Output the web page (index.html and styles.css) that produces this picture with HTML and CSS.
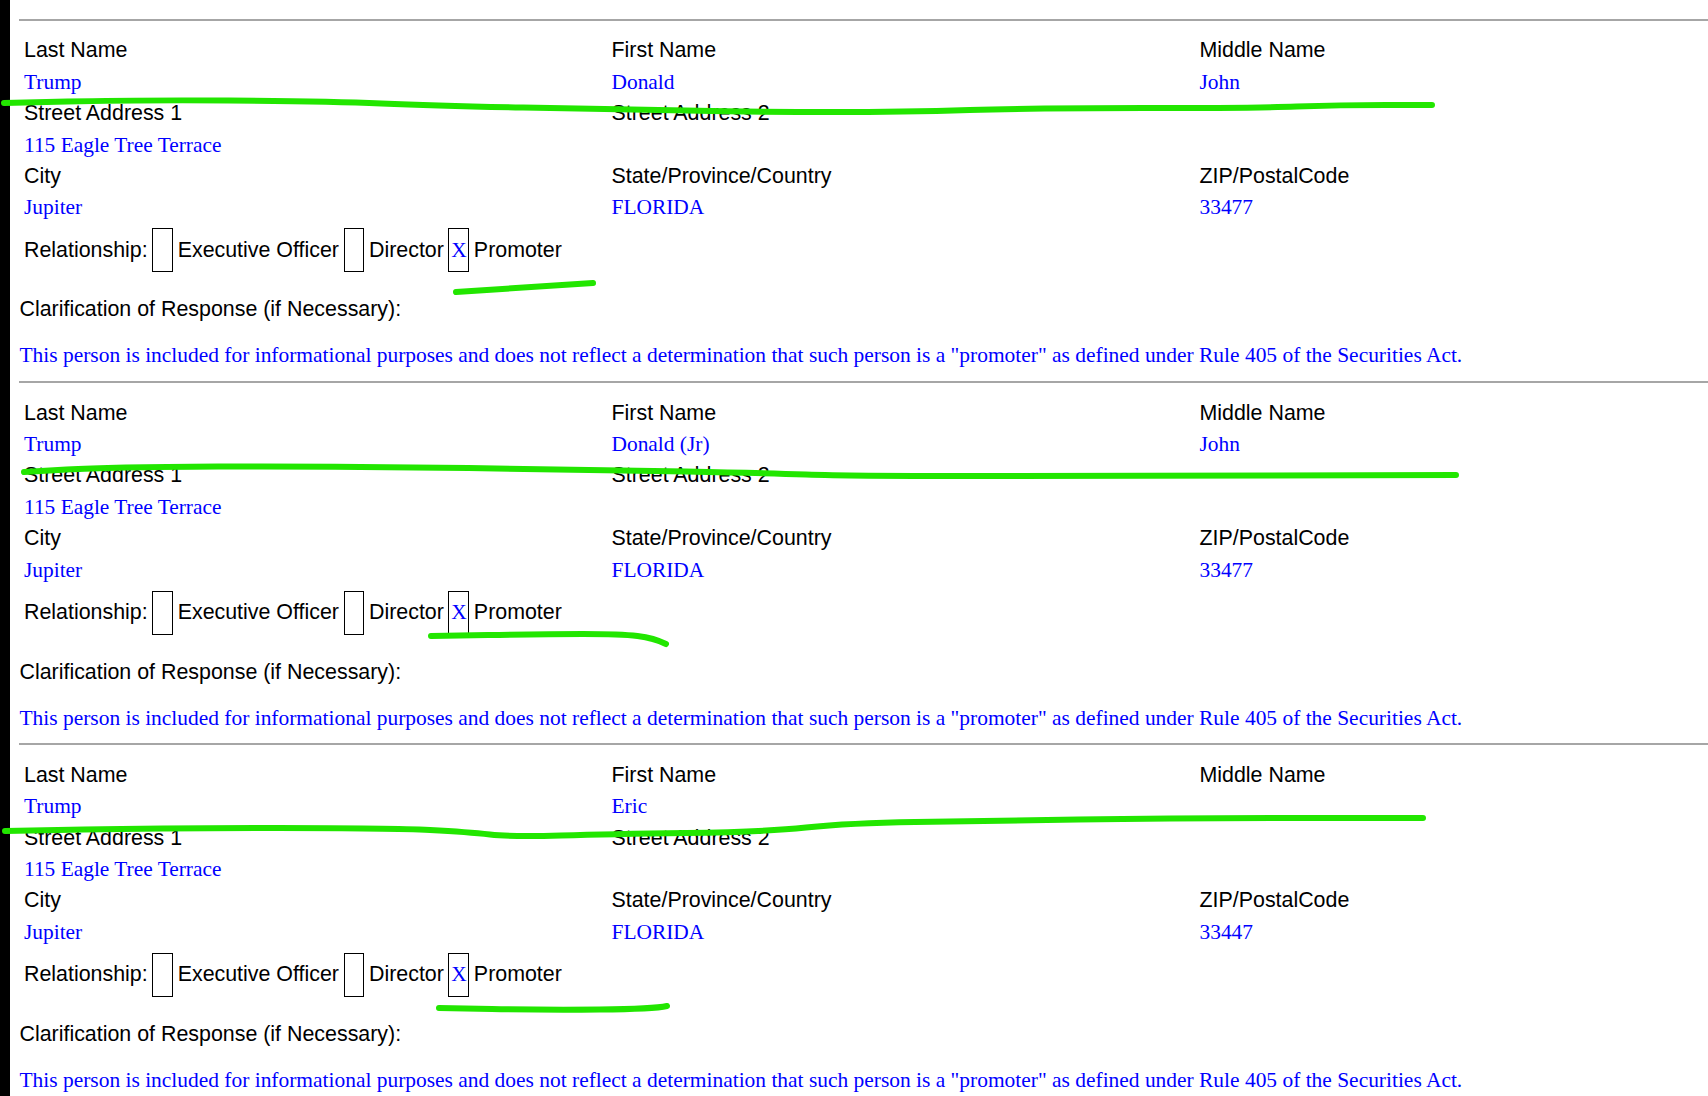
FILE: index.html
```html
<!DOCTYPE html>
<html lang="en">
<head>
<meta charset="utf-8">
<title>Related Persons</title>
<link rel="stylesheet" href="styles.css">
</head>
<body>
<div class="page">
  <div class="bar"></div>
  <main class="content">
    <section class="person">
      <div class="fields">
        <div class="label">Last Name</div><div class="label">First Name</div><div class="label">Middle Name</div>
        <div class="value">Trump</div><div class="value">Donald</div><div class="value">John</div>
        <div class="label">Street Address 1</div><div class="label wide">Street Address 2</div>
        <div class="value">115 Eagle Tree Terrace</div><div class="value wide"></div>
        <div class="label">City</div><div class="label">State/Province/Country</div><div class="label">ZIP/PostalCode</div>
        <div class="value">Jupiter</div><div class="value">FLORIDA</div><div class="value">33477</div>
      </div>
      <div class="relation"><span class="label">Relationship:</span><span class="box"></span><span class="label">Executive Officer</span><span class="box narrow"></span><span class="label">Director</span><span class="box value">X</span><span class="label">Promoter</span></div>
      <div class="label clar">Clarification of Response (if Necessary):</div>
      <div class="value note">This person is included for informational purposes and does not reflect a determination that such person is a "promoter" as defined under Rule 405 of the Securities Act.</div>
    </section>
    <section class="person">
      <div class="fields">
        <div class="label">Last Name</div><div class="label">First Name</div><div class="label">Middle Name</div>
        <div class="value">Trump</div><div class="value">Donald (Jr)</div><div class="value">John</div>
        <div class="label">Street Address 1</div><div class="label wide">Street Address 2</div>
        <div class="value">115 Eagle Tree Terrace</div><div class="value wide"></div>
        <div class="label">City</div><div class="label">State/Province/Country</div><div class="label">ZIP/PostalCode</div>
        <div class="value">Jupiter</div><div class="value">FLORIDA</div><div class="value">33477</div>
      </div>
      <div class="relation"><span class="label">Relationship:</span><span class="box"></span><span class="label">Executive Officer</span><span class="box narrow"></span><span class="label">Director</span><span class="box value">X</span><span class="label">Promoter</span></div>
      <div class="label clar">Clarification of Response (if Necessary):</div>
      <div class="value note">This person is included for informational purposes and does not reflect a determination that such person is a "promoter" as defined under Rule 405 of the Securities Act.</div>
    </section>
    <section class="person">
      <div class="fields">
        <div class="label">Last Name</div><div class="label">First Name</div><div class="label">Middle Name</div>
        <div class="value">Trump</div><div class="value">Eric</div><div class="value"></div>
        <div class="label">Street Address 1</div><div class="label wide">Street Address 2</div>
        <div class="value">115 Eagle Tree Terrace</div><div class="value wide"></div>
        <div class="label">City</div><div class="label">State/Province/Country</div><div class="label">ZIP/PostalCode</div>
        <div class="value">Jupiter</div><div class="value">FLORIDA</div><div class="value">33447</div>
      </div>
      <div class="relation"><span class="label">Relationship:</span><span class="box"></span><span class="label">Executive Officer</span><span class="box narrow"></span><span class="label">Director</span><span class="box value">X</span><span class="label">Promoter</span></div>
      <div class="label clar">Clarification of Response (if Necessary):</div>
      <div class="value note">This person is included for informational purposes and does not reflect a determination that such person is a "promoter" as defined under Rule 405 of the Securities Act.</div>
    </section>
  </main>
  <svg class="marks" width="1708" height="1096" viewBox="0 0 1708 1096" aria-hidden="true">
    <path d="M4 103 L67.5 101.5 Q131 100 229 100.5 Q327 101 381.5 103.5 Q436 106 523 107.5 Q610 109 686 110.5 Q762 112 833 112 Q904 112 969.5 110 Q1035 108 1144 108 Q1253 108 1296.5 106.5 Q1340 105 1386 105 L1432 105"/>
    <path d="M456 292 L593 283"/>
    <path d="M24 472 L66.5 469.5 Q109 467 218 466.5 Q327 466 468.5 468 Q610 470 686 471.5 Q762 473 806 474.5 Q850 476 969.5 476 Q1089 476 1272.5 475.5 L1456 475"/>
    <path d="M431 636 L488 635 Q545 634 583 634 Q621 634 637.5 636 Q654 638 666 644"/>
    <path d="M5 831 L84 829.5 Q163 828 277.5 828 Q392 828 430 830 Q468 832 490 834.5 Q512 837 561 835.5 Q610 834 686 833 Q762 832 806 827.5 Q850 823 915 822 Q980 821 1078 819.5 Q1176 818 1299.5 818 L1423 818"/>
    <path d="M439 1008 L492 1009 Q545 1010 599.5 1009.5 Q654 1009 667 1006"/>
  </svg>
</div>
</body>
</html>
```
FILE: styles.css
```css
html, body {
  margin: 0;
  height: 100%;
  overflow: hidden;
  background: #fff;
}
.page {
  position: relative;
  display: flex;
  height: 1096px;
  overflow: hidden;
}
.bar {
  flex: 0 0 10px;
  background: #000;
}
.content {
  flex: 1;
  min-width: 0;
  padding: 19px 0 0 9px;
}
.person {
  height: 360.2px;
  border-top: 2px solid #a6a6a6;
}
.label {
  font-family: "Liberation Sans", Arial, sans-serif;
  font-size: 21.4px;
  color: #000;
}
.value {
  font-family: "Liberation Serif", "Times New Roman", serif;
  font-size: 21.4px;
  color: #00f;
}
.fields {
  display: grid;
  grid-template-columns: 587.5px 588px 1fr;
  grid-auto-rows: 31.4px;
  align-items: center;
  padding: 14.3px 0 0 5px;
}
.wide {
  grid-column: 2 / 4;
}
.relation {
  display: flex;
  align-items: center;
  gap: 4.5px;
  height: 44px;
  margin: 4.7px 0 0 5px;
}
.box {
  box-sizing: border-box;
  display: flex;
  align-items: center;
  justify-content: center;
  width: 21px;
  height: 44px;
  border: 1px solid #000;
}
.narrow {
  width: 20px;
  margin-left: 1px;
}
.clar {
  margin-top: 24px;
  padding-left: 0.5px;
  line-height: 26px;
}
.note {
  margin-top: 20px;
  padding-left: 0.5px;
  line-height: 26px;
  font-size: 21.45px;
  white-space: nowrap;
}
.marks {
  position: absolute;
  left: 0;
  top: 0;
  pointer-events: none;
}
.marks path {
  fill: none;
  stroke: #22e600;
  stroke-width: 6;
  stroke-linecap: round;
  stroke-linejoin: round;
}
```
